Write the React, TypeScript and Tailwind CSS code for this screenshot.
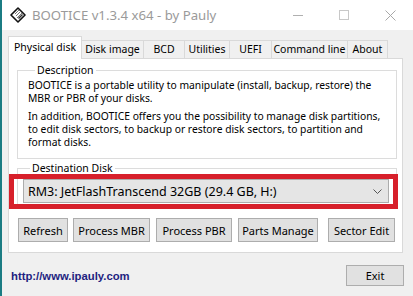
import React from "react";

const tabs = [
  { label: "Physical disk", w: "w-[74px]", active: true },
  { label: "Disk image", w: "w-[63px]" },
  { label: "BCD", w: "w-[42px]" },
  { label: "Utilities", w: "w-[46px]" },
  { label: "UEFI", w: "w-[43px]" },
  { label: "Command line", w: "w-[77px]" },
  { label: "About", w: "w-[41px]" },
];

const buttons = [
  { label: "Refresh", w: "w-[50px]" },
  { label: "Process MBR", w: "w-[77px] ml-[5px]" },
  { label: "Process PBR", w: "w-[76px] ml-[6px]" },
  { label: "Parts Manage", w: "w-[80px] ml-[6px]" },
  { label: "Sector Edit", w: "w-[67px] ml-[10px]" },
];

const AppIcon = () => (
  <svg width="16" height="16" viewBox="0 0 16 16">
    <polygon points="8,1 15,8 8,15 1,8" fill="#fff" stroke="#111" strokeWidth="1.6" strokeLinejoin="round" />
    <line x1="5" y1="7" x2="9" y2="3" stroke="#777" strokeWidth="1" />
    <line x1="6" y1="9" x2="11" y2="4" stroke="#777" strokeWidth="1" />
    <line x1="7" y1="11" x2="12" y2="6" stroke="#777" strokeWidth="1" />
    <polygon points="8,11 12,7 13,8 9,12" fill="#333" />
  </svg>
);

const App = () => {
  return (
    <div className="flex h-[296px] w-[413px] overflow-hidden whitespace-nowrap bg-[#f0f0f0] font-['Noto_Sans',sans-serif] text-[10.5px] leading-[13px] text-black">
      {/* window edge */}
      <div className="w-[2px] shrink-0 bg-[#1b7c83]" />

      <div className="flex flex-1 flex-col">
        {/* title bar */}
        <div className="flex h-[30px] shrink-0 items-center bg-white">
          <div className="ml-[8px] flex h-[16px] w-[16px] items-center justify-center">
            <AppIcon />
          </div>
          <span className="ml-[6px] text-[13.2px] leading-[16px] text-[#9a9a9a]">
            BOOTICE v1.3.4 x64 - by Pauly
          </span>
          <div className="ml-auto flex items-center">
            <div className="flex w-[46px] justify-center">
              <div className="h-[1px] w-[10px] bg-[#b0b0b0]" />
            </div>
            <div className="flex w-[46px] justify-center">
              <div className="h-[10px] w-[10px] border border-[#c8c8c8]" />
            </div>
            <div className="flex w-[46px] justify-center">
              <svg width="11" height="11" viewBox="0 0 11 11">
                <path d="M0.5 0.5 L10.5 10.5 M10.5 0.5 L0.5 10.5" stroke="#a8a8a8" strokeWidth="1" />
              </svg>
            </div>
          </div>
        </div>

        {/* body */}
        <div className="flex flex-1 flex-col pl-[6px] pr-[10px] pt-[6px]">
          {/* tabs */}
          <div className="relative z-10 flex items-end">
            {tabs.map((t) =>
              t.active ? (
                <div
                  key={t.label}
                  className={`${t.w} -mb-[1px] flex h-[23px] items-center justify-center border border-b-0 border-[#d9d9d9] bg-white pb-[2px]`}
                >
                  {t.label}
                </div>
              ) : (
                <div
                  key={t.label}
                  className={`${t.w} -ml-[1px] flex h-[18px] items-center justify-center border border-b-0 border-[#d9d9d9] bg-[#f0f0f0]`}
                >
                  {t.label}
                </div>
              )
            )}
          </div>

          {/* panel */}
          <div className="flex flex-col border border-[#d9d9d9] bg-white pb-[10px] pl-[8px] pr-[5px] pt-[5px]">
            <fieldset className="border border-[#dcdcdc] pb-[9px] pl-[10px] pr-[6px] pt-[2px] text-[10.3px]">
              <legend className="ml-[7px] px-[2px] text-[10.5px]">Description</legend>
              <p>
                BOOTICE is a portable utility to manipulate (install, backup, restore) the
                <br />
                MBR or PBR of your disks.
              </p>
              <p className="mt-[5px]">
                In addition, BOOTICE offers you the possibility to manage disk partitions,
                <br />
                to edit disk sectors, to backup or restore disk sectors, to partition and
                <br />
                format disks.
              </p>
            </fieldset>

            <fieldset className="relative mt-[3px] border border-[#dcdcdc] pb-[4px] pl-[5px] pr-[7px] pt-[4px]">
              <legend className="ml-[7px] px-[2px]">Destination Disk</legend>
              <div className="flex h-[24px] items-center border border-[#acacac] bg-[#e5e5e5] pl-[4px] pr-[6px] text-[12.5px]">
                <span>RM3: JetFlashTranscend 32GB (29.4 GB, H:)</span>
                <svg className="ml-auto" width="9" height="5" viewBox="0 0 9 5">
                  <path d="M0.5 0.5 L4.5 4.5 L8.5 0.5" fill="none" stroke="#555" strokeWidth="1" />
                </svg>
              </div>
              {/* red annotation frame */}
              <div className="pointer-events-none absolute -left-[9px] -right-[2px] -top-[1px] -bottom-[2px] border-[5px] border-[#d7202b]" />
            </fieldset>

            <div className="ml-[1px] mt-[10px] flex">
              {buttons.map((b) => (
                <button
                  key={b.label}
                  className={`${b.w} flex h-[24px] items-center justify-center border border-[#adadad] bg-[#e1e1e1] text-[11px]`}
                >
                  {b.label}
                </button>
              ))}
            </div>
          </div>

          {/* footer */}
          <div className="mt-[12px] flex items-center">
            <a className="ml-[3px] mt-[2px] font-['Liberation_Sans',sans-serif] text-[11.3px] font-bold text-[#1f1f80]">
              http://www.ipauly.com
            </a>
            <button className="ml-auto mr-[-1px] flex h-[21px] w-[58px] items-center justify-center border border-[#adadad] bg-[#e1e1e1] text-[11px]">
              Exit
            </button>
          </div>
        </div>
      </div>
    </div>
  );
};

export default App;
